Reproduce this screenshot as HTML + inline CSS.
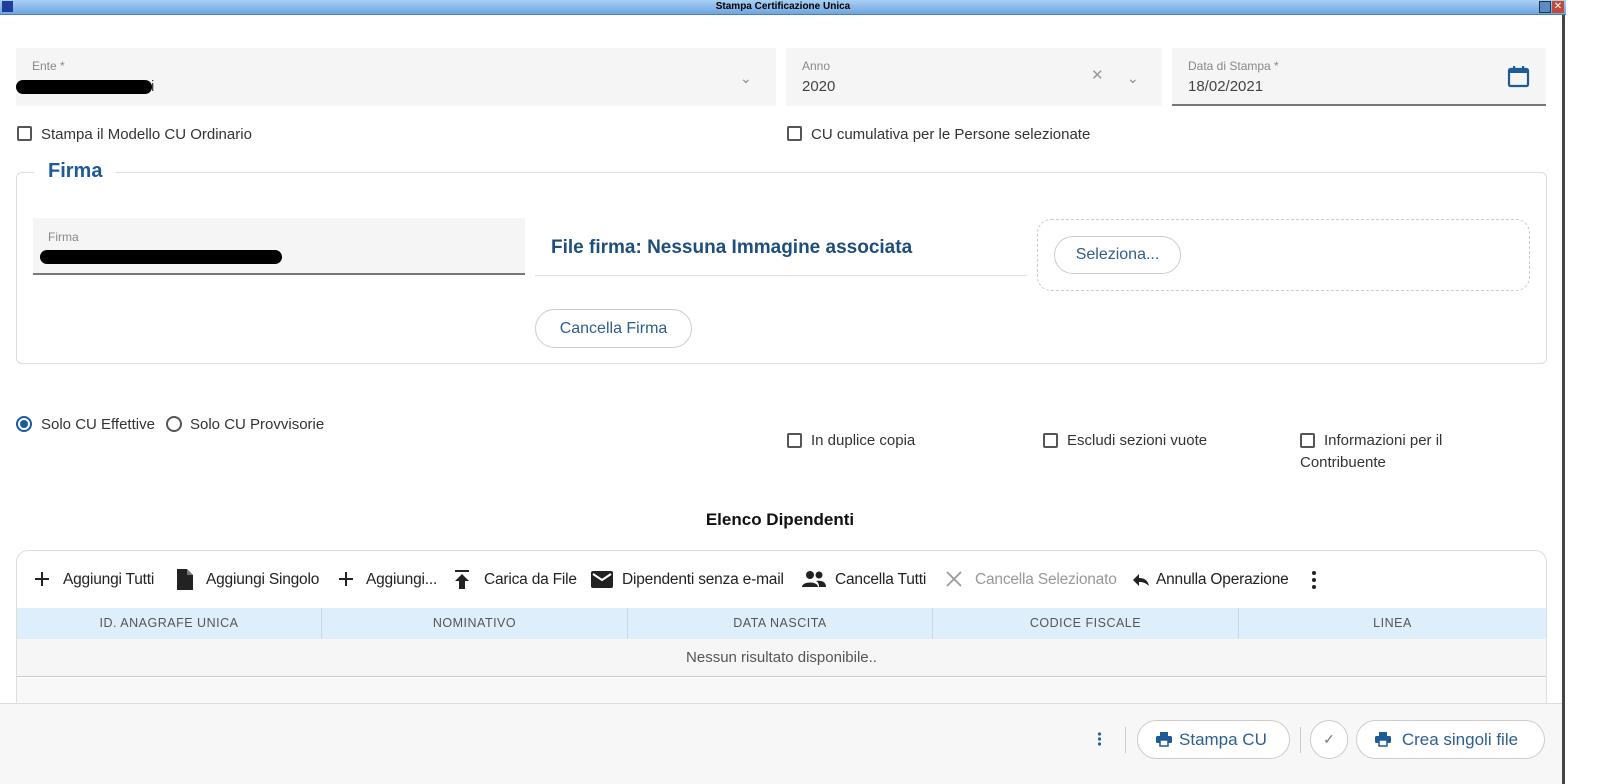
<!DOCTYPE html>
<html><head><meta charset="utf-8"><style>
*{box-sizing:border-box;margin:0;padding:0}
body{width:1600px;height:784px;overflow:hidden;background:#fff;font-family:"Liberation Sans",sans-serif;color:#333;position:relative}
.a{position:absolute}
.title{left:0;top:0;width:1566px;height:15px;background:linear-gradient(#a9cff3,#6ea6e0);border-bottom:1px solid #4a7fbf;font-size:10px;font-weight:bold;text-align:center;line-height:14px;color:#000}
.fld{background:#f5f5f5}
.lbl{font-size:12px;color:#888}
.val{font-size:15px;color:#444}
.cb{width:15px;height:15px;border:2px solid #555;border-radius:2px}
.t15{font-size:15px;color:#333}
.btn{border:1px solid #ccc;border-radius:20px;color:#2d5f8f;font-size:16px;text-align:center;background:#fff}
.hd{font-size:12.5px;color:#555;letter-spacing:.5px;text-align:center;line-height:30px;border-right:1px solid #c5d9ea}
.tb{font-size:15.5px;color:#222;top:571px;letter-spacing:-.2px}
</style></head><body>
<div class="a title">Stampa Certificazione Unica</div>
<div class="a" style="left:2px;top:1px;width:11px;height:11px;background:#1f3f9a"></div>
<div class="a" style="left:1539px;top:1px;width:12px;height:12px;background:#5b8bc4;border:1px solid #234"></div>
<div class="a" style="left:1552px;top:1px;width:12px;height:12px;background:#c24a3a;color:#fff;font-size:10px;line-height:11px;text-align:center">✕</div>
<div class="a" style="left:1562px;top:15px;width:3px;height:769px;background:#444"></div>

<div class="a fld" style="left:16px;top:48px;width:760px;height:58px"></div>
<div class="a lbl" style="left:32px;top:59px">Ente *</div>
<div class="a val" style="left:151px;top:78px">i</div>
<div class="a" style="left:16px;top:80px;width:136px;height:14px;background:#000;border-radius:7px"></div>
<div class="a" style="left:740px;top:70px;color:#888;font-size:14px">⌄</div>

<div class="a fld" style="left:786px;top:48px;width:376px;height:58px"></div>
<div class="a lbl" style="left:802px;top:59px">Anno</div>
<div class="a val" style="left:802px;top:78px">2020</div>
<div class="a" style="left:1091px;top:66px;color:#999;font-size:15px">✕</div>
<div class="a" style="left:1127px;top:70px;color:#888;font-size:14px">⌄</div>

<div class="a fld" style="left:1172px;top:48px;width:374px;height:58px;border-bottom:2px solid #777"></div>
<div class="a lbl" style="left:1188px;top:59px">Data di Stampa *</div>
<div class="a val" style="left:1188px;top:78px">18/02/2021</div>
<svg class="a" style="left:1507px;top:65px" width="24" height="24" viewBox="0 0 24 24"><rect x="2" y="4" width="19" height="17" rx="1.5" fill="none" stroke="#1e5a95" stroke-width="2.2"/><rect x="2" y="4" width="19" height="4" fill="#1e5a95"/><rect x="6" y="1" width="2.2" height="5" fill="#1e5a95"/><rect x="15" y="1" width="2.2" height="5" fill="#1e5a95"/></svg>

<div class="a cb" style="left:17px;top:126px"></div>
<div class="a t15" style="left:41px;top:126px">Stampa il Modello CU Ordinario</div>
<div class="a cb" style="left:787px;top:126px"></div>
<div class="a t15" style="left:811px;top:126px">CU cumulativa per le Persone selezionate</div>

<div class="a" style="left:16px;top:172px;width:1531px;height:192px;border:1px solid #ddd;border-radius:6px"></div>
<div class="a" style="left:34px;top:160px;padding:0 14px;background:#fff;color:#1e5a95;font-size:20px;font-weight:bold">Firma</div>
<div class="a fld" style="left:33px;top:218px;width:492px;height:57px;border-bottom:2px solid #777"></div>
<div class="a lbl" style="left:48px;top:230px">Firma</div>
<div class="a" style="left:40px;top:250px;width:242px;height:14px;background:#000;border-radius:7px"></div>
<div class="a" style="left:535px;top:275px;width:492px;height:1px;background:#ddd"></div>
<div class="a" style="left:551px;top:237px;font-size:19px;font-weight:bold;color:#1e4f7a">File firma: Nessuna Immagine associata</div>
<div class="a" style="left:1037px;top:219px;width:493px;height:72px;border:1px dashed #ccc;border-radius:14px"></div>
<div class="a btn" style="left:1054px;top:236px;width:127px;height:38px;line-height:36px">Seleziona...</div>
<div class="a btn" style="left:535px;top:309px;width:157px;height:39px;line-height:37px">Cancella Firma</div>

<div class="a" style="left:16px;top:416px;width:16px;height:16px;border:2px solid #1e5a95;border-radius:50%"><div style="margin:2px;width:8px;height:8px;border-radius:50%;background:#1e5a95"></div></div>
<div class="a t15" style="left:41px;top:416px">Solo CU Effettive</div>
<div class="a" style="left:166px;top:416px;width:16px;height:16px;border:2px solid #555;border-radius:50%"></div>
<div class="a t15" style="left:190px;top:416px">Solo CU Provvisorie</div>

<div class="a cb" style="left:787px;top:433px"></div>
<div class="a t15" style="left:811px;top:432px">In duplice copia</div>
<div class="a cb" style="left:1043px;top:433px"></div>
<div class="a t15" style="left:1067px;top:432px">Escludi sezioni vuote</div>
<div class="a cb" style="left:1300px;top:433px"></div>
<div class="a t15" style="left:1324px;top:432px">Informazioni per il</div>
<div class="a t15" style="left:1300px;top:454px">Contribuente</div>

<div class="a" style="left:0;top:510px;width:1560px;text-align:center;font-size:17px;font-weight:bold;color:#111">Elenco Dipendenti</div>

<div class="a" style="left:16px;top:550px;width:1531px;height:170px;border:1px solid #ddd;border-radius:12px 12px 0 0"></div>
<svg class="a" style="left:34px;top:571px" width="16" height="16" viewBox="0 0 16 16"><path d="M8 1V15M1 8H15" stroke="#222" stroke-width="2"/></svg>
<div class="a tb" style="left:63px">Aggiungi Tutti</div>
<svg class="a" style="left:176px;top:568px" width="18" height="23" viewBox="0 0 18 23"><path d="M1 1H11L17 7V22H1Z" fill="#222"/><path d="M11 1V7H17" fill="#777"/></svg>
<div class="a tb" style="left:206px">Aggiungi Singolo</div>
<svg class="a" style="left:338px;top:571px" width="16" height="16" viewBox="0 0 16 16"><path d="M8 1V15M1 8H15" stroke="#222" stroke-width="2"/></svg>
<div class="a tb" style="left:366px">Aggiungi...</div>
<svg class="a" style="left:454px;top:570px" width="16" height="20" viewBox="0 0 16 20"><rect x="1" y="0" width="14" height="2" fill="#222"/><path d="M8 4L1 11H5V19H11V11H15Z" fill="#222"/></svg>
<div class="a tb" style="left:484px">Carica da File</div>
<svg class="a" style="left:591px;top:571px" width="22" height="17" viewBox="0 0 22 17"><rect width="22" height="17" rx="2" fill="#222"/><path d="M2 3L11 9L20 3" stroke="#fff" stroke-width="2" fill="none"/></svg>
<div class="a tb" style="left:622px">Dipendenti senza e-mail</div>
<svg class="a" style="left:802px;top:570px" width="24" height="18" viewBox="0 0 24 18"><circle cx="8" cy="5" r="4" fill="#222"/><circle cx="17" cy="5" r="3.5" fill="#222"/><path d="M0 17C0 11 16 11 16 17Z" fill="#222"/><path d="M14 11C20 10 24 12 24 17H17C17 14 16 12 14 11Z" fill="#222"/></svg>
<div class="a tb" style="left:835px">Cancella Tutti</div>
<svg class="a" style="left:946px;top:571px" width="16" height="16" viewBox="0 0 16 16"><path d="M1 1L15 15M15 1L1 15" stroke="#999" stroke-width="1.8"/></svg>
<div class="a tb" style="left:975px;color:#999">Cancella Selezionato</div>
<svg class="a" style="left:1133px;top:573px" width="16" height="14" viewBox="0 0 16 14"><path d="M6 1L0 7L6 13V9C10 9 13 10 16 13C15 8 12 5 6 5Z" fill="#222"/></svg>
<div class="a tb" style="left:1156px">Annulla Operazione</div>
<svg class="a" style="left:1311px;top:570px" width="6" height="20" viewBox="0 0 6 20"><circle cx="3" cy="3" r="2" fill="#222"/><circle cx="3" cy="10" r="2" fill="#222"/><circle cx="3" cy="17" r="2" fill="#222"/></svg>

<div class="a" style="left:17px;top:608px;width:1529px;height:31px;background:#deeefb;display:flex">
<div class="hd" style="width:305px">ID. ANAGRAFE UNICA</div><div class="hd" style="width:306px">NOMINATIVO</div><div class="hd" style="width:305px">DATA NASCITA</div><div class="hd" style="width:306px">CODICE FISCALE</div><div class="hd" style="width:307px;border:0">LINEA</div></div>
<div class="a" style="left:17px;top:639px;width:1529px;height:38px;background:#f6f6f6;border-bottom:1px solid #ccc;text-align:center;line-height:38px;font-size:15px;color:#555">Nessun risultato disponibile..</div>
<div class="a" style="left:17px;top:678px;width:1529px;height:26px;background:#f8f8f8"></div>

<div class="a" style="left:0;top:703px;width:1562px;height:81px;background:#f7f7f7;border-top:1px solid #ddd"></div>
<svg class="a" style="left:1097px;top:732px" width="5" height="14" viewBox="0 0 5 14"><circle cx="2.5" cy="2" r="1.6" fill="#2d5f8f"/><circle cx="2.5" cy="7" r="1.6" fill="#2d5f8f"/><circle cx="2.5" cy="12" r="1.6" fill="#2d5f8f"/></svg>
<div class="a" style="left:1125px;top:727px;width:1px;height:26px;background:#ccc"></div>
<div class="a btn" style="left:1137px;top:720px;width:153px;height:39px;line-height:37px;font-size:17px">&nbsp;&nbsp;&nbsp;&nbsp;Stampa CU</div>
<svg class="a" style="left:1156px;top:731px" width="16" height="16" viewBox="0 0 16 16"><rect x="4" y="1" width="8" height="4" fill="#1e5a95"/><rect x="0" y="5" width="16" height="7" rx="1.5" fill="#1e5a95"/><rect x="4" y="9" width="8" height="6" fill="#fff" stroke="#1e5a95" stroke-width="1.5"/></svg>
<div class="a" style="left:1300px;top:727px;width:1px;height:26px;background:#ccc"></div>
<div class="a btn" style="left:1310px;top:720px;width:38px;height:39px;line-height:37px;font-size:14px;color:#777">✓</div>
<div class="a btn" style="left:1356px;top:720px;width:189px;height:39px;line-height:37px;font-size:17px">&nbsp;&nbsp;&nbsp;&nbsp;Crea singoli file</div>
<svg class="a" style="left:1375px;top:731px" width="16" height="16" viewBox="0 0 16 16"><rect x="4" y="1" width="8" height="4" fill="#1e5a95"/><rect x="0" y="5" width="16" height="7" rx="1.5" fill="#1e5a95"/><rect x="4" y="9" width="8" height="6" fill="#fff" stroke="#1e5a95" stroke-width="1.5"/></svg>
</body></html>
